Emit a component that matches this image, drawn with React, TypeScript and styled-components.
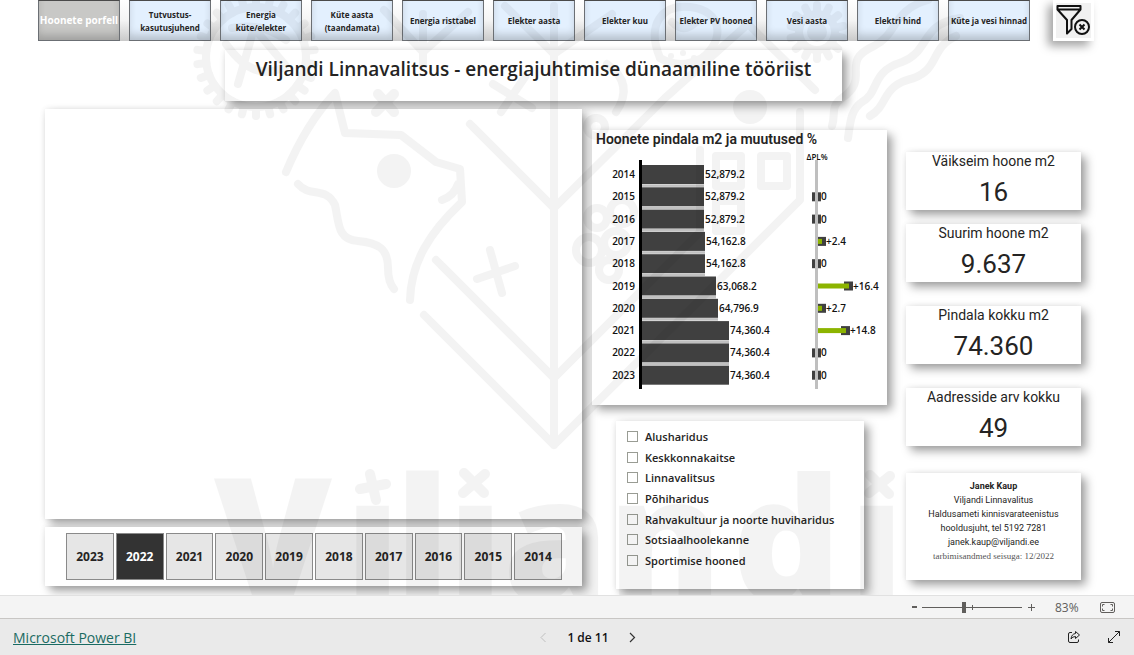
import React, { useState } from "react";
import styled, { createGlobalStyle, css } from "styled-components";

const sans = `"Open Sans", "Noto Sans", sans-serif`;
const din = `Roboto, "Liberation Sans", sans-serif`;

const GlobalStyle = createGlobalStyle`
  *, *::before, *::after { box-sizing: border-box; }
  body { margin: 0; background: #fff; color: #252423; font-family: ${sans}; }
  button { font-family: inherit; cursor: pointer; }
  h1, h2, p, ul, dl, dd { margin: 0; padding: 0; }
`;

const Page = styled.div`
  display: flex;
  flex-direction: column;
  min-height: 100vh;
`;

const Report = styled.main`
  position: relative;
  flex: 1;
  overflow: hidden;
  padding-bottom: 6px;
`;

const Artwork = styled.svg`
  position: absolute;
  top: 0;
  left: 0;
  width: 100%;
  pointer-events: none;
  opacity: 0.043;
`;

const raised = css`
  background: #fff;
  box-shadow: 5px 5px 9px rgba(0, 0, 0, 0.36), 0 0 6px rgba(0, 0, 0, 0.08);
`;

const TopRow = styled.div`
  display: flex;
  align-items: flex-start;
  gap: 23px;
  padding: 0 40px 0 38px;
`;

const PageNav = styled.nav`
  flex: 1;
  display: flex;
  gap: 9px;
  height: 41px;
  background: linear-gradient(#fff, #f4f4f4 50%, #c9c9c9);
`;

const PageButton = styled.button<{ $current?: boolean }>`
  flex: 1 1 0;
  min-width: 0;
  padding: 0;
  border: 1px solid #6b6f74;
  border-top-color: #4a4a4a;
  background: ${(p) => (p.$current ? "#c8c8c6" : "#e3f0fe")};
  color: ${(p) => (p.$current ? "#fff" : "#252423")};
  font-size: ${(p) => (p.$current ? 10 : 8)}px;
  font-weight: 700;
  line-height: 13px;
  white-space: pre;
  display: flex;
  align-items: center;
  justify-content: center;
  text-align: center;
  box-shadow: inset 0 -7px 9px -2px rgba(0, 0, 0, 0.2);
`;

const ClearButton = styled.button`
  width: 41px;
  height: 41px;
  padding: 3px;
  border: 0;
  background: #fff;
  box-shadow: -5px 5px 9px rgba(0, 0, 0, 0.36);
  svg { display: block; width: 35px; height: 35px; background: #f1f1f1; }
`;

const TitleCard = styled.header`
  ${raised}
  height: 51px;
  margin: 9px 292px 8px 225px;
  display: flex;
  justify-content: center;
`;

const Title = styled.h1`
  font-size: 19px;
  line-height: 38px;
  font-weight: 650;
  white-space: nowrap;
`;

const Board = styled.div`
  display: grid;
  grid-template-columns: 537fr 295fr 184fr;
  column-gap: 10px;
  padding: 0 53px 0 45px;
`;

const Column = styled.div<{ $top?: number; $left?: number }>`
  display: flex;
  flex-direction: column;
  padding-top: ${(p) => p.$top ?? 0}px;
  padding-left: ${(p) => p.$left ?? 0}px;
`;

const MapCard = styled.section`
  ${raised}
  height: 410px;
  margin-bottom: 8px;
`;

const YearCard = styled.section`
  ${raised}
  display: flex;
  gap: 2px;
  height: 59px;
  padding: 6px 20px 6px 21px;
`;

const YearButton = styled.button<{ $on: boolean }>`
  flex: 1 1 0;
  padding: 0;
  border: 1px solid #8a8a8a;
  background: ${(p) => (p.$on ? "#333" : "#e6e6e6")};
  color: ${(p) => (p.$on ? "#fff" : "#252423")};
  font-size: 12px;
  font-weight: 700;
`;

const ChartCard = styled.section`
  ${raised}
  height: 275px;
  margin-bottom: 16px;
  svg { display: block; width: 100%; }
`;

const ChartTitle = styled.h2`
  padding-left: 4px;
  font-family: ${din};
  font-size: 14px;
  font-weight: 600;
  line-height: 18px;
  height: 22px;
  white-space: nowrap;
`;

const SectorCard = styled.ul`
  ${raised}
  display: flex;
  flex-direction: column;
  height: 168px;
  margin: 0 23px 0 24px;
  padding: 5px 10px 18px 11px;
  list-style: none;
`;

const SectorItem = styled.li`
  flex: 1;
  display: flex;
  align-items: center;
  label {
    display: flex;
    align-items: center;
    gap: 7px;
    font-size: 11px;
    font-weight: 600;
    white-space: nowrap;
  }
  input {
    appearance: none;
    width: 11px;
    height: 11px;
    margin: 0;
    border: 1px solid #999c94;
    background: #fff;
  }
  input:checked { background: #333; }
`;

const Kpi = styled.dl<{ $gap: number }>`
  ${raised}
  height: 58px;
  margin-bottom: ${(p) => p.$gap}px;
  text-align: center;
  font-family: ${din};
  dt { font-size: 14px; line-height: 18px; white-space: nowrap; }
  dd { font-size: 26px; line-height: 44px; }
`;

const ContactCard = styled.address`
  ${raised}
  height: 107px;
  padding-top: 6px;
  text-align: center;
  font-family: ${din};
  font-style: normal;
  font-size: 9px;
  line-height: 14px;
  white-space: nowrap;
`;

const DataNote = styled.p`
  font-family: "Liberation Serif", serif;
  color: #555;
`;

const ZoomBar = styled.div`
  display: flex;
  align-items: center;
  justify-content: flex-end;
  height: 23px;
  padding-right: 19px;
  border-top: 1px solid #e1e1e1;
  background: #f4f4f4;
  color: #605e5c;
`;

const IconButton = styled.button`
  display: flex;
  align-items: center;
  justify-content: center;
  padding: 0;
  border: 0;
  background: none;
  color: inherit;
  svg { display: block; }
`;

const ZoomRange = styled.input`
  appearance: none;
  width: 100px;
  height: 12px;
  margin: 0 5px;
  background:
    linear-gradient(#605e5c, #605e5c) 50px center / 1px 5px no-repeat,
    linear-gradient(#605e5c, #605e5c) center / 100% 1px no-repeat;
  &::-webkit-slider-thumb {
    appearance: none;
    width: 4px;
    height: 11px;
    background: #605e5c;
  }
`;

const Percent = styled.output`
  width: 24px;
  margin: 0 21px 0 19px;
  font-size: 12px;
  font-weight: 400;
`;

const Footer = styled.footer`
  display: grid;
  grid-template-columns: 1fr auto 1fr;
  align-items: center;
  height: 37px;
  padding: 0 13px;
  border-top: 1px solid #c8c6c4;
  background: #eaeaea;
`;

const BrandLink = styled.a`
  justify-self: start;
  color: #1a6b62;
  font-size: 14px;
  line-height: 18px;
  padding-top: 2px;
`;

const Pager = styled.div`
  display: flex;
  align-items: center;
  gap: 20px;
  margin-left: 42px;
  color: #111;
  font-size: 12px;
  font-weight: 600;
`;

const Actions = styled.div`
  justify-self: end;
  display: flex;
  gap: 26px;
  color: #222;
`;

const pages = [
  "Hoonete porfell",
  "Tutvustus-\nkasutusjuhend",
  "Energia\nküte/elekter",
  "Küte aasta\n(taandamata)",
  "Energia risttabel",
  "Elekter aasta",
  "Elekter kuu",
  "Elekter PV hooned",
  "Vesi aasta",
  "Elektri hind",
  "Küte ja vesi hinnad",
];

const years = [2023, 2022, 2021, 2020, 2019, 2018, 2017, 2016, 2015, 2014];

const sectors = [
  "Alusharidus",
  "Keskkonnakaitse",
  "Linnavalitsus",
  "Põhiharidus",
  "Rahvakultuur ja noorte huviharidus",
  "Sotsiaalhoolekanne",
  "Sportimise hooned",
];

const kpis = [
  { label: "Väikseim hoone m2", value: "16", gap: 14 },
  { label: "Suurim hoone m2", value: "9.637", gap: 24 },
  { label: "Pindala kokku m2", value: "74.360", gap: 24 },
  { label: "Aadresside arv kokku", value: "49", gap: 27 },
];

const areas = [
  { year: 2014, area: "52,879.2", width: 62, change: null, end: 0 },
  { year: 2015, area: "52,879.2", width: 62, change: "0", end: 0 },
  { year: 2016, area: "52,879.2", width: 62, change: "0", end: 0 },
  { year: 2017, area: "54,162.8", width: 63, change: "+2.4", end: 4 },
  { year: 2018, area: "54,162.8", width: 63, change: "0", end: 0 },
  { year: 2019, area: "63,068.2", width: 74, change: "+16.4", end: 31 },
  { year: 2020, area: "64,796.9", width: 76, change: "+2.7", end: 4 },
  { year: 2021, area: "74,360.4", width: 87, change: "+14.8", end: 28 },
  { year: 2022, area: "74,360.4", width: 87, change: "0", end: 0 },
  { year: 2023, area: "74,360.4", width: 87, change: "0", end: 0 },
];

const BAR_X = 50;
const DELTA_X = 226;
const PITCH = 22.3;

function AreaChart() {
  return (
    <svg viewBox="0 0 295 252" fontFamily={sans} fontSize="10" fontWeight="650" fill="#111">
      <text x="225" y="8" textAnchor="middle" fontSize="8" fontWeight="600">ΔPL%</text>
      {areas.map((row, i) => {
        const top = 13 + i * PITCH;
        const base = top + 13;
        const tip = row.end ? DELTA_X + row.end + 4 : 229;
        return (
          <g key={row.year}>
            <text x="43" y={base} textAnchor="end">{row.year}</text>
            <rect x={BAR_X} y={top} width={row.width} height="19" fill="#404040" />
            {i < areas.length - 1 && (
              <rect x={BAR_X} y={top + 19.3} width={row.width} height="2.6" fill="#c0c0c0" />
            )}
            <text x={BAR_X + row.width + 1} y={base}>{row.area}</text>
            {row.change && (
              <>
                <rect
                  x={row.end ? Math.max(DELTA_X, tip - 9) : 220}
                  y={top + 5}
                  width={row.end ? Math.min(9, tip - DELTA_X) : 9}
                  height="9"
                  fill="#404040"
                />
                {row.end > 0 && (
                  <rect x={DELTA_X} y={top + 7} width={row.end} height="5" fill="#8cb400" />
                )}
                <text x={tip} y={base}>{row.change}</text>
              </>
            )}
          </g>
        );
      })}
      <rect x="47" y="8" width="3" height="229" fill="#000" />
      <rect x="223" y="8" width="3" height="229" fill="#bfbfbf" />
    </svg>
  );
}

function Gear({ x, y, r, teeth }: { x: number; y: number; r: number; teeth: number }) {
  return (
    <g transform={`translate(${x} ${y})`}>
      <circle r={r - 12} />
      {Array.from({ length: teeth }, (_, i) => (
        <path key={i} d={`M0 ${-r + 12}V${-r + 3}`} transform={`rotate(${(i * 360) / teeth})`} />
      ))}
    </g>
  );
}

function TownArtwork() {
  return (
    <Artwork viewBox="0 0 1134 595" aria-hidden="true">
      <g fill="none" stroke="#000" strokeWidth="8" strokeLinecap="round" strokeLinejoin="round">
        <path d="M286 172Q306 124 335 93L345 133L401 135L436 162L460 169L462 202C430 232 411 262 410 300M442 200Q454 196 458 184" />
        <path d="M298 184C310 198 326 186 335 205C339 222 337 240 358 241C378 243 388 248 388 268Q388 282 394 289" />
        <path d="M554 6V445M470 124L554 208L665 98L748 24L815 90M436 260L554 378L700 232V150M424 315L554 445L800 200V112" />
        <path d="M384 10L423 52L468 12M423 14V64M505 6L554 54L612 14" />
        <path d="M490 250L502 293M477 279L515 266M493 84L532 108M525 77L501 112" />
        <path d="M716 156h25v30h-25zM761 156h26v30h-26zM716 201h25v30h-25z" />
        <path d="M607 64Q635 84 616 112M595 118a9 9 0 1 0 2 0" />
        <path d="M660 58C646 24 662 4 690 7C722 10 726 40 702 58Q680 70 660 58M672 22q12 12 24 0" />
        <path d="M928 0C892 10 898 34 874 46C838 62 872 78 842 98C830 106 836 114 832 126M960 18C920 24 930 52 902 62C870 72 880 92 862 102C850 110 850 126 848 138M956 36C930 48 940 68 914 78C880 86 890 104 870 116" />
        <Gear x={256} y={57} r={62} teeth={26} />
        <Gear x={817} y={32} r={30} teeth={14} />
        <path d="M238 84L254 28L286 66Q254 84 226 44M232 28Q262 22 286 40" />
        <circle cx="597" cy="218" r="10" /><circle cx="622" cy="212" r="12" />
        <circle cx="589" cy="250" r="13" /><circle cx="616" cy="243" r="12" />
        <circle cx="609" cy="270" r="10" />
      </g>
      <g fill="#000">
        <circle cx="394" cy="171" r="17" />
        <circle cx="750" cy="107" r="17" />
        <circle cx="817" cy="32" r="10" />
        <circle cx="671" cy="56" r="3" /><circle cx="683" cy="53" r="3" /><circle cx="694" cy="58" r="3" />
      </g>
      <g fill="none" stroke="#000" strokeWidth="10" strokeLinecap="round">
        <path d="M378 94L394 112M394 94L376 112M370 474L376 500M360 489L386 484M464 473L484 493M485 474L463 493M870 475L889 494M890 476L869 493" />
      </g>
      <text
        fill="#000"
        y="600"
        x="214 345 395 448 503 608 732 849"
        fontFamily={sans}
        fontSize="170"
        fontWeight="800"
      >
        Vılȷandı
      </text>
    </Artwork>
  );
}

export default function App() {
  const [year, setYear] = useState(2022);
  const [zoom, setZoom] = useState(83);

  return (
    <Page>
      <GlobalStyle />
      <Report>
        <TopRow>
          <PageNav>
            {pages.map((name, i) => (
              <PageButton key={name} $current={i === 0}>{name}</PageButton>
            ))}
          </PageNav>
          <ClearButton aria-label="Clear filters">
            <svg viewBox="0 0 35 35" fill="none" stroke="#111" strokeWidth="2">
              <path d="M1.500 3H24.500V6.500L15.500 17V26L11 30.500V17L1.500 6.500ZM1.500 6.500H24.500" strokeLinejoin="round" />
              <circle cx="26" cy="24" r="7" fill="#f1f1f1" />
              <path d="M23.500 21.500L28.500 26.500M28.500 21.500L23.500 26.500" />
            </svg>
          </ClearButton>
        </TopRow>

        <TitleCard>
          <Title>Viljandi Linnavalitsus - energiajuhtimise dünaamiline tööriist</Title>
        </TitleCard>

        <Board>
          <Column>
            <MapCard />
            <YearCard>
              {years.map((y) => (
                <YearButton key={y} $on={y === year} onClick={() => setYear(y)}>{y}</YearButton>
              ))}
            </YearCard>
          </Column>

          <Column $top={21}>
            <ChartCard>
              <ChartTitle>Hoonete pindala m2 ja muutused %</ChartTitle>
              <AreaChart />
            </ChartCard>
            <SectorCard>
              {sectors.map((name) => (
                <SectorItem key={name}>
                  <label><input type="checkbox" />{name}</label>
                </SectorItem>
              ))}
            </SectorCard>
          </Column>

          <Column $top={43} $left={9}>
            {kpis.map((kpi) => (
              <Kpi key={kpi.label} $gap={kpi.gap}>
                <dt>{kpi.label}</dt>
                <dd>{kpi.value}</dd>
              </Kpi>
            ))}
            <ContactCard>
              <p><strong>Janek Kaup</strong></p>
              <p>Viljandi Linnavalitus</p>
              <p>Haldusameti kinnisvarateenistus</p>
              <p>hooldusjuht, tel 5192 7281</p>
              <p>janek.kaup@viljandi.ee</p>
              <DataNote>tarbimisandmed seisuga: 12/2022</DataNote>
            </ContactCard>
          </Column>
        </Board>
        <TownArtwork />
      </Report>

      <ZoomBar>
        <IconButton aria-label="Zoom out" onClick={() => setZoom(zoom - 1)}>
          <svg width="5" height="12" stroke="currentColor" strokeWidth="2"><path d="M0 6H5" /></svg>
        </IconButton>
        <ZoomRange
          type="range"
          aria-label="Zoom"
          min={0}
          max={200}
          value={zoom}
          onChange={(e) => setZoom(Number(e.target.value))}
        />
        <IconButton aria-label="Zoom in" onClick={() => setZoom(zoom + 1)}>
          <svg width="9" height="9" stroke="currentColor"><path d="M1 4.500H8M4.500 1V8" /></svg>
        </IconButton>
        <Percent>{zoom}%</Percent>
        <IconButton aria-label="Fit to page">
          <svg width="15" height="11" fill="none" stroke="currentColor">
            <rect x=".5" y=".5" width="14" height="10" rx="1.500" />
            <path d="M2.500 4.500V2.500H4.500M10.500 2.500H12.500V4.500M12.500 6.500V8.500H10.500M4.500 8.500H2.500V6.500" />
          </svg>
        </IconButton>
      </ZoomBar>

      <Footer>
        <BrandLink href="#">Microsoft Power BI</BrandLink>
        <Pager>
          <IconButton aria-label="Previous page" disabled>
            <svg width="7" height="11" fill="none" stroke="#c0c0c0"><path d="M5.500 1L1 5.500L5.500 10" /></svg>
          </IconButton>
          <span>1 de 11</span>
          <IconButton aria-label="Next page">
            <svg width="7" height="11" fill="none" stroke="#333" strokeWidth="1.200"><path d="M1 1L5.500 5.500L1 10" /></svg>
          </IconButton>
        </Pager>
        <Actions>
          <IconButton aria-label="Share">
            <svg width="14" height="14" fill="none" stroke="currentColor" strokeLinejoin="round">
              <path d="M5 2.500H3A1.500 1.500 0 0 0 1.500 4V11A1.500 1.500 0 0 0 3 12.500H10A1.500 1.500 0 0 0 11.500 11V9.500" />
              <path d="M8.500 1.500L12.500 5L8.500 8.500V6.500Q5.500 6.500 4 9Q4.500 4 8.500 3.500Z" />
            </svg>
          </IconButton>
          <IconButton aria-label="Full screen">
            <svg width="14" height="14" fill="none" stroke="currentColor">
              <path d="M1.500 12.500L12.500 1.500M8 1.500H12.500V6M1.500 8V12.500H6" />
            </svg>
          </IconButton>
        </Actions>
      </Footer>
    </Page>
  );
}
